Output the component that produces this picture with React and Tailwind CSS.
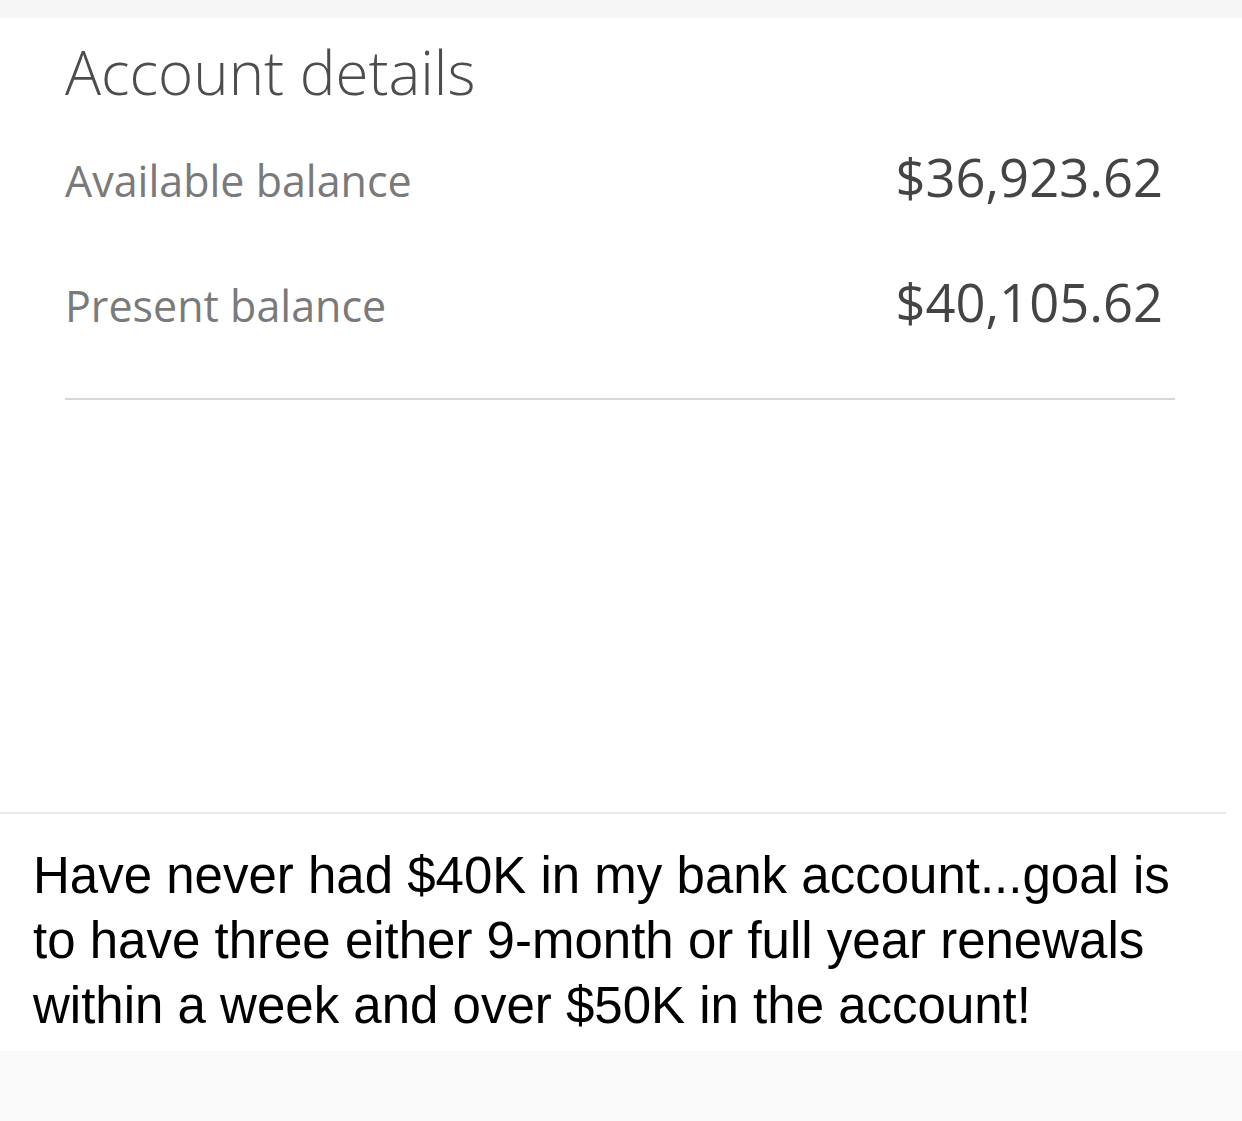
export default function App() {
  return (
    <div className="w-[1242px] h-[1121px] bg-[#fafafa] flex flex-col overflow-hidden">
      <div className="h-[18px] bg-[#f6f6f6]" />
      <div className="bg-white flex flex-col">
        <div className="pl-[65px] pr-[67px] font-['Open_Sans',sans-serif]">
          <h1 className="pt-[14px] text-[60px] font-light leading-[80px] text-[#4d4d4d]">Account details</h1>
          <div className="mt-[35px] flex justify-between items-baseline">
            <span className="text-[43px] leading-[60px] text-[#7a7a7a]">Available balance</span>
            <span className="mr-[12px] text-[52.5px] leading-[60px] text-[#444]">$36,923.62</span>
          </div>
          <div className="mt-[61px] flex justify-between items-baseline">
            <span className="text-[43px] leading-[60px] text-[#7a7a7a]">Present balance</span>
            <span className="mr-[12px] text-[52.5px] leading-[60px] text-[#444]">$40,105.62</span>
          </div>
          <div className="mt-[62px] h-[2px] bg-[#d8d8d8]" />
        </div>
        <div className="h-[412px]" />
        <div className="mr-[16px] h-[2px] bg-[#e9e9e9]" />
        <p className="pl-[33px] pr-[20px] pt-[29px] pb-[13px] whitespace-nowrap font-['Liberation_Sans',Arial,sans-serif] text-[51px] leading-[65px] text-black">
          Have never had $40K in my bank account...goal is
          <br />
          to have three either 9-month or full year renewals
          <br />
          within a week and over $50K in the account!
        </p>
      </div>
    </div>
  );
}
